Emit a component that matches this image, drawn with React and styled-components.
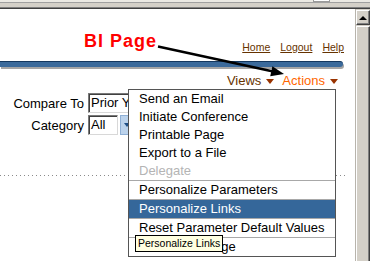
import React from "react";
import styled, { createGlobalStyle } from "styled-components";

const GlobalStyle = createGlobalStyle`
  html, body {
    margin: 0;
    padding: 0;
    background: #ffffff;
  }
  body {
    font-family: "Liberation Sans", Arial, sans-serif;
  }
`;

const Window = styled.div`
  width: 370px;
  height: 261px;
  display: flex;
  flex-direction: column;
  overflow: hidden;
`;

// strip of the browser frame above the page
const TopChrome = styled.div`
  position: relative;
  height: 8px;
  flex: 0 0 auto;
  background: #d4d0c8;
  border-bottom: 1px solid #404040;
  box-shadow: inset 0 -1px 0 #808080;

  &::before {
    content: "";
    position: absolute;
    left: 0;
    right: 0;
    top: 0;
    height: 2px;
    background: #ebe9e3;
    border-bottom: 1px solid #a0a0a0;
  }

  &::after {
    content: "";
    position: absolute;
    left: 313px;
    width: 15px;
    top: 0;
    height: 1px;
    background: #ffffff;
    border: 1px solid #9a9a9a;
    border-top: none;
  }
`;

const Body = styled.div`
  flex: 1;
  display: flex;
  min-height: 0;
`;

const Page = styled.div`
  position: relative;
  flex: 1;
  background: #ffffff;
`;

const Header = styled.div`
  display: flex;
  justify-content: flex-end;
  gap: 10px;
  padding: 31px 11px 0 0;
  height: 14px;
`;

const GlobalLink = styled.a`
  font-size: 10.5px;
  line-height: 14px;
  color: #663300;
  text-decoration: underline;
  cursor: pointer;
`;

const BlueBar = styled.div`
  margin: 7px 12px 0 0;
  height: 5px;
  background: #3b6a9b;
  border-top: 1px solid #13375e;
  border-radius: 0 3px 3px 0;
  box-shadow: 1px 2px 0 #a5a5a5;
`;

const MenuBar = styled.div`
  display: flex;
  justify-content: flex-end;
  align-items: center;
  padding: 0 17px 0 0;
  margin-top: 6px;
  height: 15px;
`;

const MenuTitle = styled.span`
  display: flex;
  align-items: center;
  font-size: 13px;
  line-height: 15px;
  color: ${(props) => (props.active ? "#ff6600" : "#663300")};
  margin-left: ${(props) => (props.active ? "8px" : "0")};

  &::after {
    content: "";
    margin-left: 5px;
    margin-top: 1px;
    border-left: 4px solid transparent;
    border-right: 4px solid transparent;
    border-top: 5px solid #993300;
  }
`;

const Form = styled.div`
  display: grid;
  grid-template-columns: 84px auto;
  column-gap: 4px;
  row-gap: 2px;
  margin-top: 5px;
  align-items: center;
`;

const Label = styled.span`
  text-align: right;
  font-size: 13px;
  color: #000000;
`;

const FieldRow = styled.div`
  display: flex;
  align-items: center;
  gap: 2px;
`;

const SelectBox = styled.div`
  box-sizing: border-box;
  width: ${(props) => props.width}px;
  height: 20px;
  padding: 1px 0 0 2px;
  font-size: 13px;
  line-height: 16px;
  background: #ffffff;
  border-top: 1px solid #7a7a7a;
  border-left: 1px solid #7a7a7a;
  border-right: 1px solid #d8d8d8;
  border-bottom: 1px solid #d8d8d8;
  box-shadow: inset 1px 1px 0 #404040;
  white-space: nowrap;
  overflow: hidden;
`;

const LovButton = styled.div`
  width: 12px;
  height: 18px;
  background: #bcd3ec;
  border: 1px solid #8fb0d6;
  display: flex;
  align-items: center;
  justify-content: center;

  &::after {
    content: "";
    border-left: 3px solid transparent;
    border-right: 3px solid transparent;
    border-top: 4px solid #1f4f86;
  }
`;

const Dotted = styled.div`
  margin: 40px 10px 0 0;
  height: 1px;
  background-image: linear-gradient(to right, #8a8a8a 1px, transparent 1px);
  background-size: 4px 1px;
`;

const Menu = styled.div`
  position: absolute;
  left: 128px;
  top: 80px;
  width: 206px;
  background: #ffffff;
  border: 1px solid #555555;
`;

const MenuItem = styled.div`
  height: 18px;
  line-height: 18px;
  padding-left: 10px;
  font-size: 13px;
  white-space: nowrap;
  color: ${(props) =>
    props.disabled ? "#b4b4b4" : props.selected ? "#ffffff" : "#000000"};
  background: ${(props) => (props.selected ? "#35679a" : "transparent")};
`;

const Separator = styled.div`
  height: 1px;
  background: #a8a8a8;
`;

const Tooltip = styled.div`
  position: absolute;
  left: 135px;
  top: 226px;
  padding: 1px 2px 1px 2px;
  font-size: 10.5px;
  line-height: 13px;
  background: #ffffe1;
  border: 1px solid #000000;
  white-space: nowrap;
`;

const Callout = styled.div`
  position: absolute;
  left: 84px;
  top: 23px;
  font-size: 18px;
  line-height: 18px;
  font-weight: bold;
  letter-spacing: 1px;
  color: #ff0000;
`;

const ArrowLayer = styled.svg`
  position: absolute;
  left: 0;
  top: 0;
  width: 355px;
  height: 80px;
  pointer-events: none;
`;

const Scrollbar = styled.div`
  width: 14px;
  flex: 0 0 auto;
  display: flex;
  flex-direction: column;
  background: #d4d0c8;
  border-left: 1px solid #b8b4ac;
`;

const ScrollButton = styled.div`
  box-sizing: border-box;
  height: 15px;
  margin-top: 1px;
  background: #d4d0c8;
  border-top: 1px solid #ffffff;
  border-left: 1px solid #ffffff;
  border-right: 1px solid #404040;
  border-bottom: 1px solid #404040;
  box-shadow: inset -1px -1px 0 #808080;
  display: flex;
  align-items: center;
  justify-content: center;

  &::after {
    content: "";
    border-left: 4px solid transparent;
    border-right: 4px solid transparent;
    border-bottom: 4px solid #000000;
  }
`;

const ScrollThumb = styled.div`
  flex: 1;
  margin-top: 1px;
  background: #d4d0c8;
  border-top: 1px solid #ffffff;
  border-left: 1px solid #ffffff;
  border-right: 1px solid #404040;
  box-shadow: inset -1px 0 0 #808080;
`;

const menuGroups = [
  [
    { label: "Send an Email" },
    { label: "Initiate Conference" },
    { label: "Printable Page" },
    { label: "Export to a File" },
    { label: "Delegate", disabled: true },
  ],
  [{ label: "Personalize Parameters" }],
  [{ label: "Personalize Links", selected: true }],
  [{ label: "Reset Parameter Default Values" }],
  [{ label: "Go to Start Page" }],
];

const App = () => {
  return (
    <Window>
      <GlobalStyle />
      <TopChrome />
      <Body>
        <Page>
          <Header>
            <GlobalLink>Home</GlobalLink>
            <GlobalLink>Logout</GlobalLink>
            <GlobalLink>Help</GlobalLink>
          </Header>
          <BlueBar />
          <MenuBar>
            <MenuTitle>Views</MenuTitle>
            <MenuTitle active>Actions</MenuTitle>
          </MenuBar>

          <Form>
            <Label>Compare To</Label>
            <FieldRow>
              <SelectBox width={96}>Prior Year</SelectBox>
            </FieldRow>
            <Label>Category</Label>
            <FieldRow>
              <SelectBox width={30}>All</SelectBox>
              <LovButton />
            </FieldRow>
          </Form>

          <Dotted />

          <Callout>BI Page</Callout>
          <ArrowLayer viewBox="0 0 355 80">
            <line
              x1="158"
              y1="37.5"
              x2="272"
              y2="62.2"
              stroke="#000000"
              strokeWidth="2.5"
            />
            <polygon points="284,65 270.2,67.3 272.4,57.3" fill="#000000" />
          </ArrowLayer>

          <Menu>
            {menuGroups.map((group, gi) => (
              <React.Fragment key={gi}>
                {gi > 0 && <Separator />}
                {group.map((item) => (
                  <MenuItem
                    key={item.label}
                    disabled={item.disabled}
                    selected={item.selected}
                  >
                    {item.label}
                  </MenuItem>
                ))}
              </React.Fragment>
            ))}
          </Menu>

          <Tooltip>Personalize Links</Tooltip>
        </Page>
        <Scrollbar>
          <ScrollButton />
          <ScrollThumb />
        </Scrollbar>
      </Body>
    </Window>
  );
};

export default App;
